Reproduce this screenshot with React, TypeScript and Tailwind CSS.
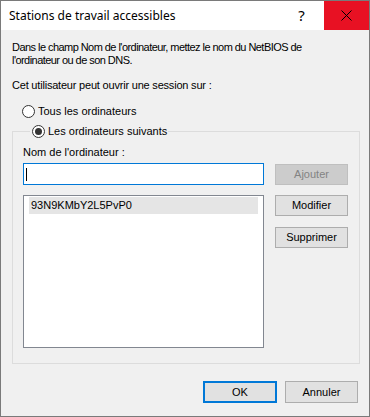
import React from "react";

const uiFont = { fontFamily: '"Liberation Sans", Arial, sans-serif' };

function Radio({ checked }: { checked?: boolean }) {
  return (
    <span className="flex h-[13px] w-[13px] shrink-0 items-center justify-center rounded-full border border-[#333333] bg-white">
      {checked && <span className="h-[7px] w-[7px] rounded-full bg-[#333333]" />}
    </span>
  );
}

function WinButton({
  label,
  disabled,
  isDefault,
  small,
}: {
  label: string;
  disabled?: boolean;
  isDefault?: boolean;
  small?: boolean;
}) {
  const base = `flex ${small ? "h-[21px]" : "h-[22px]"} items-center justify-center text-[11px]`;
  if (disabled)
    return (
      <div className={`${base} w-[73px] border border-[#bfbfbf] bg-[#cccccc] text-[#838383]`}>{label}</div>
    );
  if (isDefault)
    return (
      <div className={`${base} w-[74px] border-2 border-[#0078d7] bg-[#e1e1e1] text-black`}>{label}</div>
    );
  return (
    <div className={`${base} w-[73px] border border-[#adadad] bg-[#e1e1e1] text-black`}>{label}</div>
  );
}

export default function App() {
  return (
    <div
      className="flex h-[417px] w-[370px] flex-col border border-[#7a7a7a] bg-[#f0f0f0] text-black"
      style={uiFont}
    >
      {/* title bar */}
      <div className="flex h-[29px] shrink-0 items-center bg-white">
        <span
          className="flex-1 pl-[8px] text-[12px] text-black"
          style={{ fontFamily: '"Noto Sans", "Open Sans", sans-serif' }}
        >
          Stations de travail accessibles
        </span>
        <span className="flex h-full w-[45px] items-center justify-center text-[15px]" style={{ fontFamily: '"Noto Sans", sans-serif' }}>
          ?
        </span>
        <span className="flex h-full w-[45px] items-center justify-center bg-[#e81123]">
          <svg width="11" height="11" viewBox="0 0 11 11">
            <path d="M0.5 0.5 L10.5 10.5 M10.5 0.5 L0.5 10.5" stroke="#000" strokeWidth="1" />
          </svg>
        </span>
      </div>

      {/* body */}
      <div className="flex flex-1 flex-col px-[11px]">
        <p className="mt-[11px] text-[11px] leading-[13px] tracking-[-0.55px]">
          Dans le champ Nom de l'ordinateur, mettez le nom du NetBIOS de
          <br />
          l'ordinateur ou de son DNS.
        </p>
        <p className="mt-[12px] text-[11px] leading-[13px] tracking-[-0.2px]">
          Cet utilisateur peut ouvrir une session sur :
        </p>

        <label className="mt-[13px] ml-[10px] flex items-center gap-[3px] text-[11px] leading-[13px]">
          <Radio />
          Tous les ordinateurs
        </label>

        <fieldset className="mt-[6px] h-[240px] w-[348px] border border-[#dcdcdc] px-[10px]">
          <legend className="ml-[7px] flex h-[14px] items-center gap-[3px] pl-[2px] pr-[1px] text-[11px] leading-[14px]">
            <Radio checked />
            Les ordinateurs suivants
          </legend>
          <div className="mt-[8px] text-[11px] leading-[13px]">Nom de l'ordinateur :</div>
          <div className="mt-[4px] flex gap-[11px]">
            <div className="flex h-[22px] w-[241px] items-center border border-[#0078d7] bg-white pl-[2px]">
              <span className="h-[13px] w-[1px] bg-black" />
            </div>
            <div className="pt-[1px]">
              <WinButton label="Ajouter" disabled small />
            </div>
          </div>
          <div className="mt-[10px] flex gap-[11px]">
            <div className="h-[153px] w-[241px] border border-[#828790] bg-white px-[5px] pt-[1px]">
              <div className="flex h-[17px] items-center bg-[#e5e5e5] pl-[2px] text-[11px]">93N9KMbY2L5PvP0</div>
            </div>
            <div className="flex flex-col gap-[11px]">
              <WinButton label="Modifier" small />
              <WinButton label="Supprimer" small />
            </div>
          </div>
        </fieldset>

        <div className="mt-[17px] flex justify-end gap-[8px]">
          <WinButton label="OK" isDefault />
          <WinButton label="Annuler" />
        </div>
      </div>
    </div>
  );
}
